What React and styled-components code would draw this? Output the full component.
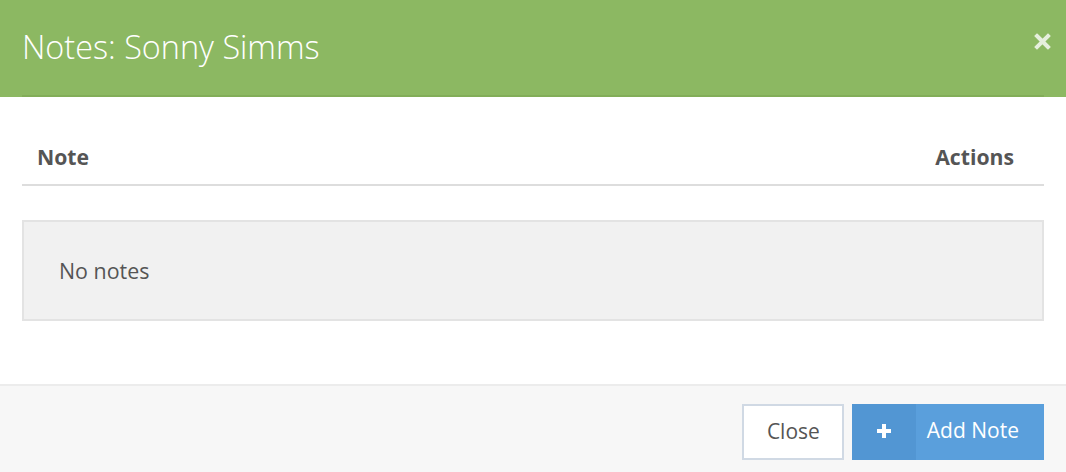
import React from "react";
import styled, { createGlobalStyle } from "styled-components";

const GlobalStyle = createGlobalStyle`
  *, *::before, *::after {
    box-sizing: border-box;
  }
  html, body {
    margin: 0;
    padding: 0;
    background: #ffffff;
  }
  body {
    font-family: "Open Sans", "Liberation Sans", sans-serif;
    color: #555555;
  }
`;

const Modal = styled.div`
  width: 1066px;
  height: 472px;
  display: flex;
  flex-direction: column;
  background: #ffffff;
  overflow: hidden;
`;

const Header = styled.header`
  background: #8cb862;
  padding: 0 22px;
  display: flex;
  align-items: stretch;
`;

const HeaderInner = styled.div`
  flex: 1;
  height: 97px;
  border-bottom: 2px solid #82ad58;
  display: flex;
  align-items: center;
  justify-content: space-between;
`;

const Title = styled.h1`
  margin: 0;
  font-size: 32.4px;
  font-weight: 300;
  line-height: 1;
  color: #ffffff;
  padding-bottom: 2px;
`;

const CloseIcon = styled.button`
  border: 0;
  background: transparent;
  padding: 0;
  width: 18px;
  height: 18px;
  margin: 0 -7px 12px 0;
  cursor: pointer;
  display: flex;
  align-items: center;
  justify-content: center;
`;

const Body = styled.div`
  flex: 1;
  padding: 32px 22px 0;
`;

const Table = styled.table`
  width: 100%;
  border-collapse: collapse;
`;

const HeadCell = styled.th`
  padding: 16px 30px 16px 15px;
  font-size: 21.2px;
  line-height: 23px;
  font-weight: 700;
  color: #555555;
  text-align: ${(p) => p.$align || "left"};
  border-bottom: 2px solid #dddddd;
`;

const EmptyBox = styled.div`
  margin-top: 34px;
  height: 101px;
  border: 2px solid #e3e3e3;
  background: #f1f1f1;
  display: flex;
  align-items: center;
  padding: 0 35px;
  font-size: 21.4px;
  color: #555555;
`;

const Footer = styled.footer`
  height: 88px;
  border-top: 2px solid #ececec;
  background: #f7f7f7;
  display: flex;
  justify-content: flex-end;
  align-items: flex-start;
  padding: 18px 22px 0;
  gap: 8px;
`;

const Button = styled.button`
  height: 56px;
  display: flex;
  align-items: stretch;
  padding: 0;
  font-family: "Open Sans", "Liberation Sans", sans-serif;
  font-size: 21px;
  cursor: pointer;
  border: ${(p) => (p.$primary ? "0" : "2px solid #d0d9e4")};
  background: ${(p) => (p.$primary ? "#5a9fdc" : "#ffffff")};
  color: ${(p) => (p.$primary ? "#ffffff" : "#555555")};
`;

const Label = styled.span`
  display: flex;
  align-items: center;
  padding: ${(p) => p.$pad};
`;

const IconPart = styled.span`
  width: 64px;
  background: #5296d3;
  display: flex;
  align-items: center;
  justify-content: center;
  padding-bottom: 2px;
`;

const CrossIcon = () => (
  <svg width="17" height="17" viewBox="0 0 17 17">
    <path
      d="M3 3 L14 14 M14 3 L3 14"
      stroke="#e6efdd"
      strokeWidth="4"
      strokeLinecap="square"
    />
  </svg>
);

const PlusIcon = () => (
  <svg width="16" height="16" viewBox="0 0 16 16">
    <path d="M8 1 V15 M1 8 H15" stroke="#ffffff" strokeWidth="4" />
  </svg>
);

export default function App() {
  return (
    <Modal>
      <GlobalStyle />
      <Header>
        <HeaderInner>
          <Title>Notes: Sonny Simms</Title>
          <CloseIcon aria-label="Close">
            <CrossIcon />
          </CloseIcon>
        </HeaderInner>
      </Header>
      <Body>
        <Table>
          <thead>
            <tr>
              <HeadCell>Note</HeadCell>
              <HeadCell $align="right">Actions</HeadCell>
            </tr>
          </thead>
        </Table>
        <EmptyBox>No notes</EmptyBox>
      </Body>
      <Footer>
        <Button>
          <Label $pad="0 22px 2px 23px">Close</Label>
        </Button>
        <Button $primary>
          <IconPart>
            <PlusIcon />
          </IconPart>
          <Label $pad="0 25px 4px 11px">Add Note</Label>
        </Button>
      </Footer>
    </Modal>
  );
}
